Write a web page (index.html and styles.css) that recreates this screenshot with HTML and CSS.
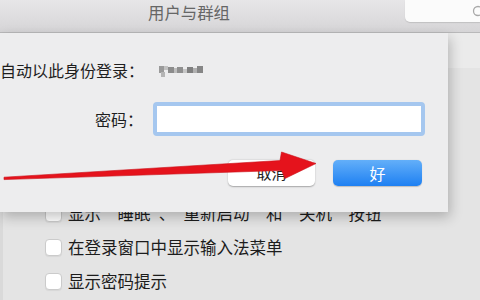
FILE: index.html
```html
<!DOCTYPE html>
<html lang="zh-CN">
<head>
<meta charset="utf-8">
<link rel="stylesheet" href="styles.css">
</head>
<body>
<div class="window">
  <header class="toolbar">
    <div class="title">用户与群组</div>
    <div class="search">
      <svg class="search-icon" width="14" height="14" viewBox="0 0 14 14"><circle cx="7" cy="7" r="4.5" fill="none" stroke="#a8a8a8" stroke-width="1.3"/></svg>
    </div>
  </header>
  <main class="pane">
    <div class="pane-band"></div>
    <ul class="options">
      <li class="option"><span class="check"></span><span class="option-text">显示“睡眠”、“重新启动”和“关机”按钮</span></li>
      <li class="option"><span class="check"></span><span class="option-text">在登录窗口中显示输入法菜单</span></li>
      <li class="option"><span class="check"></span><span class="option-text">显示密码提示</span></li>
    </ul>

    <section class="sheet">
      <div class="sheet-row user-row">
        <span class="label">自动以此身份登录：</span>
        <svg class="user-blur" width="46" height="13" viewBox="0 0 46 13">
          <rect x="0" y="2" width="5" height="7" fill="#9a9a9a"/>
          <rect x="5" y="2" width="4" height="4" fill="#c2c2c2"/>
          <rect x="2" y="8" width="4" height="5" fill="#b5b5b5"/>
          <rect x="9" y="3" width="6" height="6" fill="#8c8c8c"/>
          <rect x="15" y="4" width="3" height="5" fill="#bdbdbd"/>
          <rect x="18" y="3" width="6" height="6" fill="#8f8f8f"/>
          <rect x="24" y="5" width="4" height="4" fill="#c6c6c6"/>
          <rect x="28" y="3" width="6" height="6" fill="#7f7f7f"/>
          <rect x="34" y="4" width="4" height="5" fill="#b0b0b0"/>
          <rect x="38" y="2" width="6" height="7" fill="#868686"/>
        </svg>
      </div>
      <div class="sheet-row pass-row">
        <span class="label">密码：</span>
        <div class="input"></div>
      </div>
      <div class="buttons">
        <button class="btn btn-cancel">取消</button>
        <button class="btn btn-ok">好</button>
      </div>
    </section>
  </main>
  <svg class="arrow" width="480" height="300" viewBox="0 0 480 300">
    <polygon points="4,177.2 280,160.5 281.5,152 316,163.5 285,178.5 281.5,170.5 4,179.6" fill="#e5131c" stroke="#c90f17" stroke-width="0.6" stroke-linejoin="round"/>
  </svg>
</div>
</body>
</html>
```

FILE: styles.css
```css
* { box-sizing: border-box; }
html, body {
  margin: 0;
  padding: 0;
  width: 480px;
  height: 300px;
  overflow: hidden;
  background: #e3e3e3;
  font-family: "Noto Sans CJK SC", "Noto Sans", sans-serif;
}
.window {
  position: relative;
  width: 480px;
  height: 300px;
  display: flex;
  flex-direction: column;
}
.toolbar {
  flex: 0 0 33px;
  display: flex;
  background: linear-gradient(#e7e6e8, #d6d5d7);
  border-bottom: 1px solid #b9b9ba;
}
.title {
  flex: 0 0 378px;
  text-align: center;
  font-size: 16.4px;
  line-height: 22px;
  padding-top: 1px;
  color: #666;
}
.search {
  margin-left: auto;
  width: 75px;
  height: 22px;
  background: #fbfbfb;
  border-bottom-left-radius: 5px;
  box-shadow: 0 1px 1px rgba(0,0,0,0.12);
  display: flex;
  justify-content: flex-end;
  align-items: center;
}
.search-icon { margin-right: -5px; }
.pane {
  position: relative;
  flex: 1;
  background: #e4e4e4;
  border-left: 3px solid #d9d9d9;
}
.pane-band {
  height: 35px;
  background: #ebebeb;
}
.options {
  list-style: none;
  margin: 0;
  padding: 137px 0 0 42px;
  display: flex;
  flex-direction: column;
  gap: 17px;
}
.option {
  display: flex;
  align-items: center;
  height: 17px;
}
.check {
  width: 17px;
  height: 17px;
  background: #fff;
  border: 1px solid #cbcbcb;
  border-radius: 4px;
  box-shadow: 0 1px 1px rgba(0,0,0,0.06);
}
.option-text {
  margin-left: 6px;
  font-size: 16.5px;
  line-height: 17px;
  color: #1c1c1c;
  white-space: nowrap;
}
.sheet {
  position: absolute;
  top: 0;
  left: -3px;
  width: 448px;
  height: 179px;
  background: #ededee;
  box-shadow: 2px 5px 12px rgba(0,0,0,0.24);
  padding-top: 26px;
}
.sheet-row {
  display: flex;
  align-items: center;
}
.label {
  flex: 0 0 143px;
  text-align: right;
  font-size: 16px;
  line-height: 22px;
  color: #1e1e1e;
  white-space: nowrap;
}
.user-row { height: 22px; }
.user-blur { margin-left: 15px; }
.pass-row { margin-top: 21px; }
.input {
  margin-left: 10px;
  width: 272px;
  height: 34px;
  background: #fff;
  border: 4px solid #a5c7ef;
  border-radius: 4px;
}
.buttons {
  margin-top: 24px;
  display: flex;
  justify-content: flex-end;
  gap: 18px;
  padding-right: 26px;
}
.btn {
  height: 26px;
  border: none;
  border-radius: 5px;
  font-family: "Noto Sans CJK SC", sans-serif;
  font-size: 15px;
  line-height: 26px;
  padding: 0;
}
.btn-cancel {
  width: 87px;
  background: #fff;
  color: #222;
  box-shadow: 0 0.5px 1.5px rgba(0,0,0,0.3);
}
.btn-ok {
  width: 89px;
  background: linear-gradient(#63aff9, #1e80f2);
  color: #fff;
  font-size: 16px;
  box-shadow: 0 0.5px 1px rgba(0,0,0,0.2);
}
.arrow {
  position: absolute;
  top: 0;
  left: 0;
  pointer-events: none;
}
```
